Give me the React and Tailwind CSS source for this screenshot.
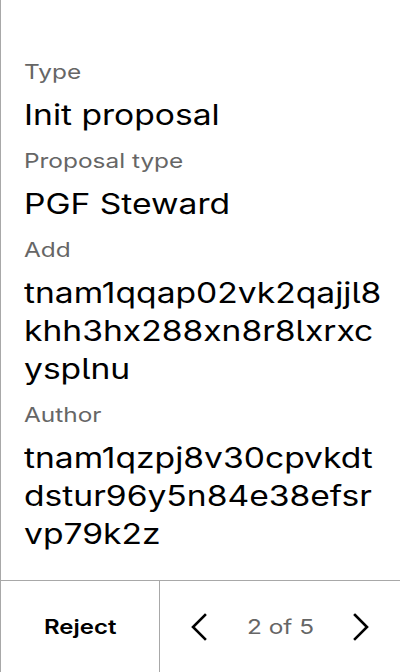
import React from "react";

function Field({ label, lines, tail }) {
  return (
    <div className="flex flex-col">
      <div className="mb-[10px]">
        <span className="inline-block origin-left scale-x-[1.22] text-[20px] leading-[28px] text-[#666666]">
          {label}
        </span>
      </div>
      <div>
        <span
          className={
            "inline-block origin-left scale-x-[1.2] text-[28px] leading-[38px] text-black whitespace-nowrap" +
            (tail ? " [font-feature-settings:'cv05']" : "")
          }
        >
          {lines.map((l, i) => (
            <React.Fragment key={i}>
              {i > 0 && <br />}
              {l}
            </React.Fragment>
          ))}
        </span>
      </div>
    </div>
  );
}

function Chevron({ dir }) {
  return (
    <svg width="16" height="28" viewBox="0 0 16 28" fill="none" stroke="black" strokeWidth="2.6" strokeLinecap="square" strokeLinejoin="miter">
      {dir === "left" ? <polyline points="14,2 2,14 14,26" /> : <polyline points="2,2 14,14 2,26" />}
    </svg>
  );
}

export default function App() {
  return (
    <div
      className="w-[400px] h-[672px] overflow-hidden flex flex-col bg-white border-l border-[#a8a8a8]"
      style={{ fontFamily: "Inter, 'Noto Sans', sans-serif" }}
    >
      <div className="flex-1 flex flex-col gap-[13px] pl-[23px] pr-6 pt-[58px]">
        <Field label="Type" lines={["Init proposal"]} />
        <Field label="Proposal type" lines={["PGF Steward"]} />
        <Field label="Add" tail lines={["tnam1qqap02vk2qajjl8", "khh3hx288xn8r8lxrxc", "ysplnu"]} />
        <Field label="Author" tail lines={["tnam1qzpj8v30cpvkdt", "dstur96y5n84e38efsr", "vp79k2z"]} />
      </div>
      <div className="h-[92px] shrink-0 border-t border-[#a8a8a8] flex">
        <div className="w-[159px] shrink-0 flex items-center justify-center border-r border-[#a8a8a8]">
          <span className="inline-block scale-x-[1.2] text-[20px] font-semibold text-black">Reject</span>
        </div>
        <div className="flex-1 flex items-center justify-between px-[31px]">
          <Chevron dir="left" />
          <span className="inline-block scale-x-[1.22] text-[20px] text-[#666666]">2 of 5</span>
          <Chevron dir="right" />
        </div>
      </div>
    </div>
  );
}
